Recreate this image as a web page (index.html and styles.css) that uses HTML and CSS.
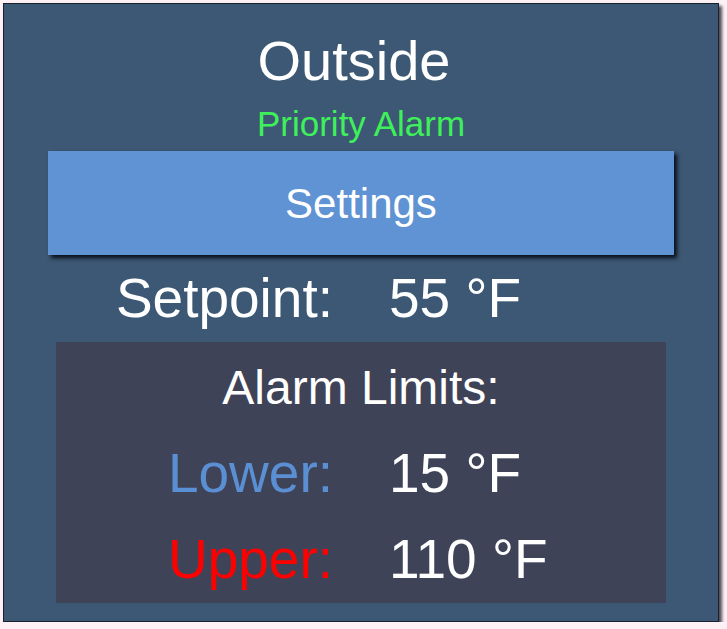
FILE: index.html
```html
<!DOCTYPE html>
<html>
<head>
<meta charset="utf-8">
<link rel="stylesheet" href="styles.css">
</head>
<body>
<div class="panel">
  <div class="title">Outside</div>
  <div class="status">Priority Alarm</div>
  <div class="button">Settings</div>
  <div class="row setpoint">
    <div class="label">Setpoint:</div>
    <div class="value">55 °F</div>
  </div>
  <div class="limits">
    <div class="limits-title">Alarm Limits:</div>
    <div class="row lower">
      <div class="label">Lower:</div>
      <div class="value">15 °F</div>
    </div>
    <div class="row upper">
      <div class="label">Upper:</div>
      <div class="value">110 °F</div>
    </div>
  </div>
</div>
</body>
</html>
```
FILE: styles.css
```css
html, body {
  margin: 0;
  padding: 0;
  background: #fdf1f6;
}
body {
  padding: 3px 0 0 3px;
  font-family: "Liberation Sans", Arial, sans-serif;
  color: #ffffff;
}
.panel {
  box-sizing: border-box;
  width: 716px;
  height: 619px;
  background: #3d5874;
  border: 1px solid #17222f;
  box-shadow: 3px 3px 3px rgba(20, 20, 30, 0.75);
  display: flex;
  flex-direction: column;
  padding-top: 27px;
}
.title {
  font-size: 56px;
  line-height: 60px;
  text-align: center;
  padding-right: 14px;
}
.status {
  margin-top: 13px;
  font-size: 35px;
  line-height: 40px;
  text-align: center;
  color: #3ef05a;
}
.button {
  margin: 7px 44px 0 44px;
  height: 102px;
  padding-top: 2px;
  line-height: 102px;
  background: #5f93d3;
  font-size: 42px;
  text-align: center;
  box-shadow: 3px 3px 4px rgba(5, 10, 20, 0.95);
}
.row {
  display: grid;
  grid-template-columns: 1fr 1fr;
  column-gap: 56px;
  font-size: 55px;
  line-height: 60px;
}
.row .label {
  text-align: right;
}
.row .value {
  text-align: left;
}
.setpoint {
  margin-top: 13px;
}
.limits {
  margin: 14px 52px 0 52px;
  height: 261px;
  box-sizing: border-box;
  background: #3f4358;
  padding-top: 18px;
}
.limits-title {
  font-size: 48px;
  line-height: 56px;
  text-align: center;
}
.lower {
  margin-top: 27px;
}
.lower .label {
  color: #5b8fd3;
}
.upper {
  margin-top: 26px;
}
.upper .label {
  color: #ff0000;
}
```
